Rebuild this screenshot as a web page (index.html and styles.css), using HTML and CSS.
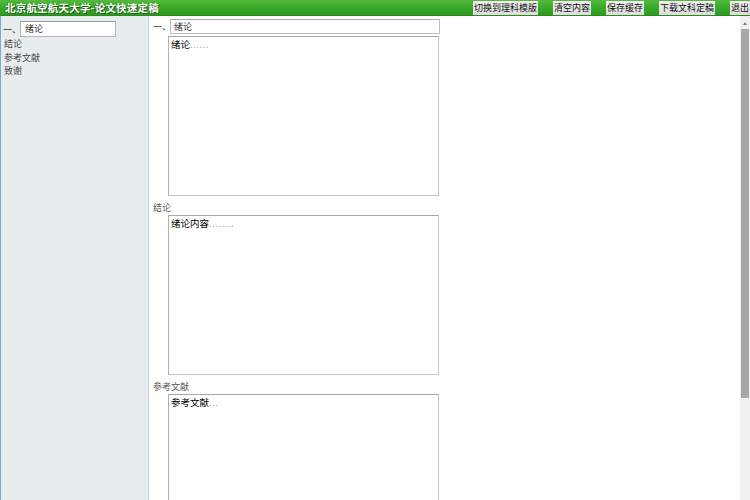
FILE: index.html
```html
<!DOCTYPE html>
<html lang="zh-CN">
<head>
<meta charset="utf-8">
<title>北京航空航天大学-论文快速定稿</title>
<link rel="stylesheet" href="styles.css">
</head>
<body>
<div class="app">
  <header class="topbar">
    <div class="title">北京航空航天大学-论文快速定稿</div>
    <nav class="actions">
      <span class="btn">切换到理科模版</span>
      <span class="btn">清空内容</span>
      <span class="btn">保存缓存</span>
      <span class="btn">下载文科定稿</span>
      <span class="btn">退出</span>
    </nav>
  </header>
  <div class="body">
    <aside class="sidebar">
      <div class="side-row">
        <span class="side-label">一、</span>
        <div class="side-input">绪论</div>
      </div>
      <ul class="toc">
        <li>结论</li>
        <li>参考文献</li>
        <li>致谢</li>
      </ul>
    </aside>
    <main class="content">
      <div class="head-row">
        <span class="num">一、</span>
        <div class="field">绪论</div>
      </div>
      <div class="box">绪论<span class="dots">......</span></div>
      <div class="sec-label">结论</div>
      <div class="box">绪论内容<span class="dots">........</span></div>
      <div class="sec-label">参考文献</div>
      <div class="box">参考文献<span class="dots">...</span></div>
    </main>
    <div class="scrollbar">
      <div class="arrow"></div>
      <div class="thumb"></div>
    </div>
  </div>
</div>
</body>
</html>
```

FILE: styles.css
```css
* { box-sizing: border-box; }
html, body { margin: 0; padding: 0; }
body {
  width: 750px;
  height: 500px;
  overflow: hidden;
  background: #fff;
  font-family: "Noto Sans CJK SC", "DejaVu Sans", sans-serif;
  font-size: 9px;
  color: #222;
}
.app { display: flex; flex-direction: column; height: 500px; overflow: hidden; }

.topbar {
  height: 16px;
  flex: 0 0 16px;
  display: flex;
  align-items: flex-start;
  background: linear-gradient(#52bb3c, #37a626 60%, #2f9a21);
  border-bottom: 1px solid #2a8a1d;
  overflow: hidden;
}
.title {
  flex: 0 0 473px;
  padding-left: 5px;
  line-height: 15px;
  font-size: 10.5px;
  font-weight: bold;
  color: #fff;
  text-shadow: 1px 1px 0 #1e5a15, -1px 0 0 #2a7a1d;
  letter-spacing: 0.2px;
  white-space: nowrap;
}
.actions {
  display: flex;
  gap: 15px;
  padding-top: 1px;
  white-space: nowrap;
}
.btn {
  display: block;
  height: 14px;
  line-height: 14px;
  padding: 0 1px;
  background: linear-gradient(#f0f0f0, #dcdcdc);
  color: #111;
  font-size: 9px;
  flex-shrink: 0;
}

.body { flex: 1; display: flex; min-height: 0; overflow: hidden; }

.sidebar {
  flex: 0 0 149px;
  background: #e7ecef;
  border-left: 1px solid #86a4d2;
  border-right: 1px solid #d3d8db;
  padding: 5px 0 0 2px;
}
.side-row { display: flex; align-items: center; }
.side-label { width: 17px; color: #333; }
.side-input {
  width: 96px;
  height: 16px;
  line-height: 14px;
  background: #fff;
  border: 1px solid #b4b4b4;
  border-top-color: #9a9a9a;
  padding-left: 4px;
  color: #333;
}
.toc {
  list-style: none;
  margin: 0;
  padding: 0 0 0 1px;
  line-height: 13.5px;
  color: #444;
}

.content {
  flex: 1;
  padding: 3px 0 0 4px;
  min-width: 0;
  overflow: hidden;
}
.head-row { display: flex; align-items: center; height: 15px; }
.num { width: 17px; color: #444; }
.field {
  width: 270px;
  height: 15px;
  line-height: 13px;
  border: 1px solid #bdbdbd;
  border-top-color: #a8a8a8;
  padding-left: 3px;
  color: #333;
}
.box {
  width: 271px;
  height: 160px;
  margin-left: 15px;
  margin-top: 2px;
  border: 1px solid #c4c4c4;
  border-top-color: #a6a6a6;
  border-left-color: #b0b0b0;
  padding: 1px 2px;
  line-height: 13px;
  font-size: 9.5px;
  color: #000;
}
.dots { color: #999; letter-spacing: 0.5px; }
.sec-label {
  margin-top: 5px;
  margin-bottom: -1px;
  line-height: 13px;
  color: #555;
}

.scrollbar {
  flex: 0 0 10px;
  background: #f1f1f1;
  display: flex;
  flex-direction: column;
  align-items: center;
}
.arrow {
  margin-top: 6px;
  width: 0;
  height: 0;
  border-left: 2px solid transparent;
  border-right: 2px solid transparent;
  border-bottom: 3px solid #7a7a7a;
}
.thumb {
  margin-top: 4px;
  width: 8px;
  height: 369px;
  background: #a8a8a8;
}
```
